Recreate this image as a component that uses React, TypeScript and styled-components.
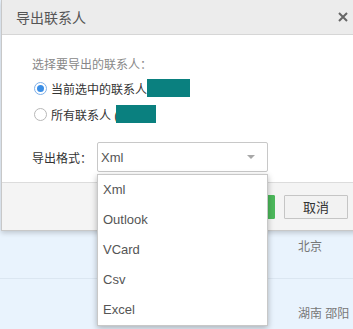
import styled, { createGlobalStyle } from 'styled-components'

const GlobalStyle = createGlobalStyle`
  html, body {
    margin: 0;
    padding: 0;
    background: #e9f3fd;
    overflow: hidden;
  }
  body {
    font-family: 'Liberation Sans', 'Noto Sans CJK SC', sans-serif;
  }
`

const Page = styled.div`
  width: 353px;
  height: 329px;
  overflow: hidden;
  display: flex;
  flex-direction: column;
`

const Dialog = styled.div`
  position: relative;
  z-index: 2;
  width: 358px;
  margin-left: 1px;
  border-left: 1px solid #c8c8c8;
  border-bottom: 1px solid #c8c8c8;
  background: #fff;
  box-shadow: 0 2px 5px rgba(0, 0, 0, 0.18);
  flex-shrink: 0;
`

const TitleBar = styled.div`
  height: 34px;
  display: flex;
  align-items: center;
  justify-content: space-between;
  padding: 0 13px 0 14px;
  background: #ececec;
  border-bottom: 1px solid #d6d6d6;
  box-sizing: content-box;
`

const Title = styled.span`
  font-size: 14px;
  color: #555;
`

const Close = styled.span`
  display: flex;
  margin-right: -1px;
`

const Body = styled.div`
  padding: 20px 0 10px 30px;
  display: flex;
  flex-direction: column;
`

const Hint = styled.div`
  font-size: 12px;
  line-height: 20px;
  color: #888;
`

const RadioRow = styled.div`
  height: 26px;
  display: flex;
  align-items: center;
  font-size: 12px;
  color: #333;
`

const Radio = styled.span<{ checked?: boolean }>`
  width: 11px;
  height: 11px;
  border-radius: 50%;
  margin: 0 4px 0 2px;
  border: 1px solid ${({ checked }) => (checked ? '#7fb0e8' : '#b8b8b8')};
  background: #fff;
  display: flex;
  align-items: center;
  justify-content: center;
  &::after {
    content: '';
    width: 7px;
    height: 7px;
    border-radius: 50%;
    background: #3a8ee6;
    display: ${({ checked }) => (checked ? 'block' : 'none')};
  }
`

const Redact = styled.span<{ w: number; shift?: number }>`
  display: inline-block;
  width: ${({ w }) => w}px;
  height: 18px;
  margin-left: ${({ shift }) => shift ?? 0}px;
  background: #0a807f;
`

const FormatRow = styled.div`
  margin-top: 15px;
  display: flex;
  align-items: center;
  font-size: 12px;
  color: #333;
`

const FormatLabel = styled.span`
  width: 65px;
`

const SelectWrap = styled.div`
  position: relative;
`

const SelectBox = styled.div`
  width: 171px;
  height: 30px;
  border: 1px solid #c8c8c8;
  border-radius: 2px;
  display: flex;
  align-items: center;
  justify-content: space-between;
  padding: 0 12px 0 3px;
  box-sizing: border-box;
  font-size: 13px;
  color: #555;
`

const Arrow = styled.span`
  width: 0;
  height: 0;
  border-left: 4px solid transparent;
  border-right: 4px solid transparent;
  border-top: 4px solid #a8a8a8;
`

const Menu = styled.ul`
  position: absolute;
  top: 32px;
  left: 0;
  width: 169px;
  margin: 0;
  padding: 0;
  list-style: none;
  background: #fff;
  border: 1px solid #c8c8c8;
  box-shadow: 0 2px 6px rgba(0, 0, 0, 0.28);
  z-index: 5;
`

const MenuItem = styled.li`
  height: 30px;
  line-height: 30px;
  padding-left: 5px;
  font-size: 13px;
  color: #555;
`

const Footer = styled.div`
  height: 47px;
  background: #f4f4f4;
  border-top: 1px solid #dcdcdc;
  display: flex;
  align-items: center;
  justify-content: flex-end;
  gap: 9px;
  padding-right: 12px;
`

const Button = styled.button<{ primary?: boolean }>`
  height: 24px;
  width: ${({ primary }) => (primary ? 62 : 64)}px;
  padding: 0;
  border-radius: 1px;
  font-family: inherit;
  font-size: 13px;
  border: 1px solid ${({ primary }) => (primary ? '#4cb85b' : '#c5c5c5')};
  background: ${({ primary }) => (primary ? '#4cb85b' : '#f2f2f2')};
  color: ${({ primary }) => (primary ? '#fff' : '#333')};
`

const List = styled.div`
  margin-top: -18px;
  position: relative;
  z-index: 1;
`

const ListRow = styled.div<{ last?: boolean }>`
  height: 66px;
  display: flex;
  align-items: center;
  padding-left: 298px;
  font-size: 12px;
  color: #777;
  border-bottom: ${({ last }) => (last ? 'none' : '1px solid #dbe6f1')};
  box-sizing: border-box;
`

const formats = ['Xml', 'Outlook', 'VCard', 'Csv', 'Excel']

export default function App() {
  return (
    <Page>
      <GlobalStyle />
      <Dialog>
        <TitleBar>
          <Title>导出联系人</Title>
          <Close>
            <svg width="10" height="10" viewBox="0 0 10 10">
              <path d="M1 1L9 9M9 1L1 9" stroke="#666" strokeWidth="2" />
            </svg>
          </Close>
        </TitleBar>
        <Body>
          <Hint>选择要导出的联系人：</Hint>
          <RadioRow>
            <Radio checked />
            当前选中的联系人
            <Redact w={43} />
          </RadioRow>
          <RadioRow>
            <Radio />
            所有联系人 (
            <Redact w={40} shift={-2} />
          </RadioRow>
          <FormatRow>
            <FormatLabel>导出格式：</FormatLabel>
            <SelectWrap>
              <SelectBox>
                Xml
                <Arrow />
              </SelectBox>
              <Menu>
                {formats.map((f) => (
                  <MenuItem key={f}>{f}</MenuItem>
                ))}
              </Menu>
            </SelectWrap>
          </FormatRow>
        </Body>
        <Footer>
          <Button primary>确定</Button>
          <Button>取消</Button>
        </Footer>
      </Dialog>
      <List>
        <ListRow>北京</ListRow>
        <ListRow last>湖南 邵阳</ListRow>
      </List>
    </Page>
  )
}
